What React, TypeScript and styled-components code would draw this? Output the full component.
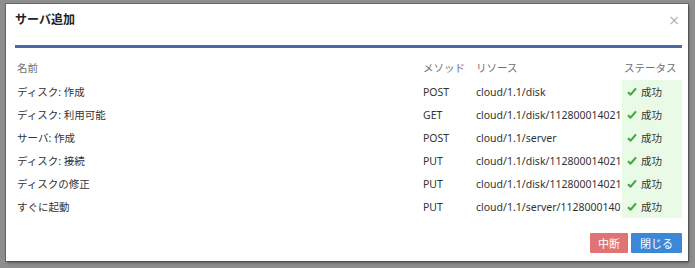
import styled, { createGlobalStyle } from 'styled-components';

const GlobalStyle = createGlobalStyle`
  html, body {
    margin: 0;
    padding: 0;
    background: #8e8e8e;
    font-family: "Noto Sans", "Noto Sans CJK JP", sans-serif;
  }
`;

/** The dimmed page behind the dialog. */
const Backdrop = styled.div`
  width: 695px;
  height: 268px;
  padding: 4px 0 0 6px;
  box-sizing: border-box;
  background: #8e8e8e;
`;

const Modal = styled.div`
  width: 682px;
  height: 257px;
  background: #fff;
  box-shadow: 0 0 0 1px rgba(0, 0, 0, 0.25), 1px 2px 3px rgba(0, 0, 0, 0.35);
  display: flex;
  flex-direction: column;
  padding: 0 6px 0 9px;
  box-sizing: border-box;
`;

const Header = styled.div`
  height: 44px;
  padding-top: 8px;
  box-sizing: border-box;
  display: flex;
  justify-content: space-between;
  align-items: flex-start;
  border-bottom: 3px solid #4a6aa6;
`;

const Title = styled.h1`
  margin: 0;
  font-size: 12px;
  line-height: 16px;
  font-weight: 700;
  color: #222;
`;

const Close = styled.button`
  border: 0;
  background: none;
  padding: 0;
  margin: 1px 2px 0 0;
  font-size: 14px;
  line-height: 14px;
  color: #b0b0b0;
  font-family: "DejaVu Sans", sans-serif;
  cursor: pointer;
`;

const Table = styled.table`
  margin-top: 7px;
  width: 667px;
  table-layout: fixed;
  border-collapse: collapse;
  font-size: 10.5px;
  color: #333;
`;

const HeadCell = styled.th`
  height: 25px;
  padding: 0 2px;
  text-align: left;
  font-weight: 400;
  color: #6f6f6f;
  white-space: nowrap;
  overflow: hidden;
  vertical-align: middle;
`;

const Cell = styled.td<{ $status?: boolean }>`
  height: 23px;
  padding: 0 ${p => (p.$status ? '0 0 5px' : '2px')};
  white-space: nowrap;
  overflow: hidden;
  vertical-align: middle;
  background: ${p => (p.$status ? '#e9fbe6' : 'transparent')};
`;

const Ok = styled.span`
  display: inline-flex;
  align-items: center;
  gap: 4px;
`;

const Footer = styled.div`
  margin-top: auto;
  padding-bottom: 8px;
  display: flex;
  justify-content: flex-end;
  gap: 3px;
`;

const Button = styled.button<{ $tone: 'danger' | 'primary' }>`
  height: 20px;
  padding: 0 ${p => (p.$tone === 'danger' ? '8px' : '9px')};
  border: 0;
  border-radius: 1px;
  color: #fff;
  font-family: inherit;
  font-size: 11px;
  background: ${p => (p.$tone === 'danger' ? '#e07474' : '#3a88d6')};
`;

const CheckIcon = () => (
  <svg width="10" height="9" viewBox="0 0 10 9">
    <path d="M1 5.2 L3.6 7.6 L9 1.4" fill="none" stroke="#43a83f" strokeWidth="2.2" strokeLinejoin="round" />
  </svg>
);

const rows = [
  { name: 'ディスク: 作成', method: 'POST', resource: 'cloud/1.1/disk' },
  { name: 'ディスク: 利用可能', method: 'GET', resource: 'cloud/1.1/disk/112800014021' },
  { name: 'サーバ: 作成', method: 'POST', resource: 'cloud/1.1/server' },
  { name: 'ディスク: 接続', method: 'PUT', resource: 'cloud/1.1/disk/112800014021' },
  { name: 'ディスクの修正', method: 'PUT', resource: 'cloud/1.1/disk/112800014021' },
  { name: 'すぐに起動', method: 'PUT', resource: 'cloud/1.1/server/1128000140' },
];

export default function App() {
  return (
    <>
      <GlobalStyle />
      <Backdrop>
        <Modal>
          <Header>
            <Title>サーバ追加</Title>
            <Close>×</Close>
          </Header>
          <Table>
            <colgroup>
              <col style={{ width: 406 }} />
              <col style={{ width: 53 }} />
              <col style={{ width: 148 }} />
              <col style={{ width: 60 }} />
            </colgroup>
            <thead>
              <tr>
                <HeadCell>名前</HeadCell>
                <HeadCell>メソッド</HeadCell>
                <HeadCell>リソース</HeadCell>
                <HeadCell>ステータス</HeadCell>
              </tr>
            </thead>
            <tbody>
              {rows.map(r => (
                <tr key={r.name}>
                  <Cell>{r.name}</Cell>
                  <Cell>{r.method}</Cell>
                  <Cell>{r.resource}</Cell>
                  <Cell $status>
                    <Ok>
                      <CheckIcon />
                      成功
                    </Ok>
                  </Cell>
                </tr>
              ))}
            </tbody>
          </Table>
          <Footer>
            <Button $tone="danger">中断</Button>
            <Button $tone="primary">閉じる</Button>
          </Footer>
        </Modal>
      </Backdrop>
    </>
  );
}
